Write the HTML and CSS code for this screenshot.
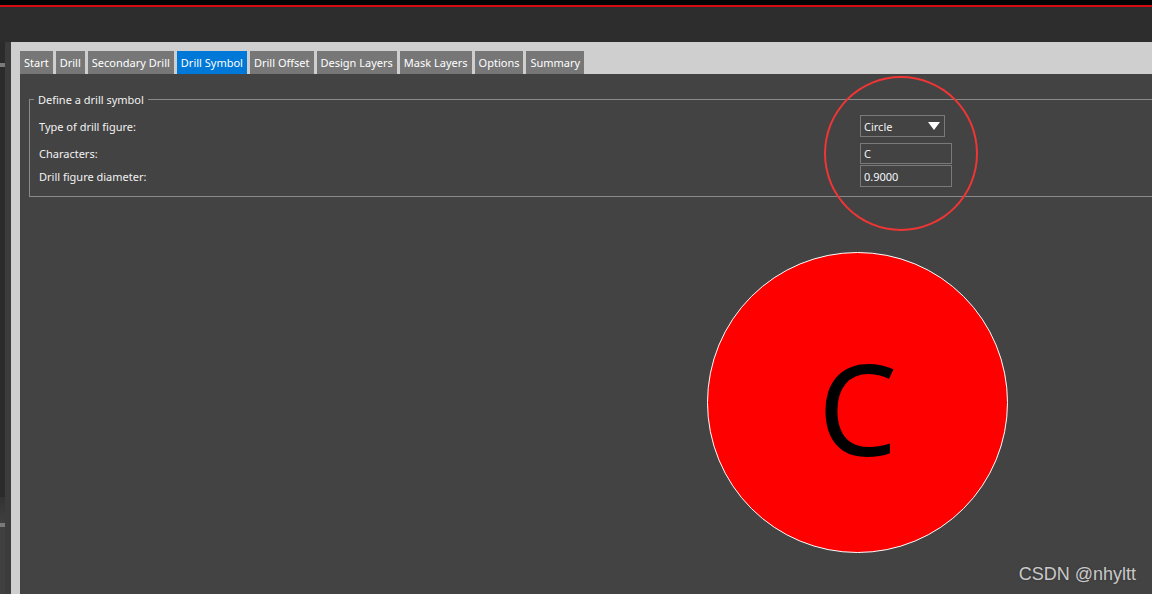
FILE: index.html
```html
<!DOCTYPE html>
<html lang="en">

<head>
    <meta charset="UTF-8">
    <meta name="viewport" content="width=device-width, initial-scale=1.0">
    <title>Drill Symbol</title>
    <link rel="stylesheet" href="styles.css">
</head>

<body>
    <!-- pasek tytułowy aplikacji -->
    <div class="titlebar">
        <div class="accent"></div>
    </div>

    <div class="workspace">
        <!-- wąski panel boczny po lewej -->
        <div class="sidebar">
            <div class="strip">
                <div class="strip-top"></div>
                <div class="strip-mark"></div>
                <div class="strip-body"></div>
                <div class="strip-fade"></div>
                <div class="strip-mark"></div>
            </div>
            <div class="gutter"></div>
        </div>

        <!-- okno dialogowe z zakładkami -->
        <div class="dialog">
            <div class="tabs">
                <div class="tab">Start</div>
                <div class="tab">Drill</div>
                <div class="tab">Secondary Drill</div>
                <div class="tab active">Drill Symbol</div>
                <div class="tab">Drill Offset</div>
                <div class="tab">Design Layers</div>
                <div class="tab">Mask Layers</div>
                <div class="tab">Options</div>
                <div class="tab">Summary</div>
            </div>

            <div class="panel">
                <fieldset class="group">
                    <legend>Define a drill symbol</legend>
                    <div class="form">
                        <label class="row-type">Type of drill figure:</label>
                        <div class="combo row-type">
                            <span>Circle</span>
                            <span class="arrow"></span>
                        </div>
                        <label class="row-char">Characters:</label>
                        <div class="field row-char">C</div>
                        <label class="row-diam">Drill figure diameter:</label>
                        <div class="field field-diam row-diam">0.9000</div>
                    </div>
                </fieldset>

                <!-- podgląd symbolu wiercenia -->
                <div class="preview">
                    <div class="symbol">C</div>
                </div>

                <div class="highlight"></div>
                <div class="watermark">CSDN @nhyltt</div>
            </div>
        </div>
    </div>
</body>

</html>
```

FILE: styles.css
```css
/* Cała strona */
body {
    margin: 0;
    padding: 0;
    width: 1152px;
    height: 594px;
    overflow: hidden;
    background-color: #2d2d2d;
    font-family: "Noto Sans", "Open Sans", sans-serif;
    font-size: 11px;
    color: #f2f2f2;
}

/* Pasek tytułowy */
.titlebar {
    height: 42px;
    border-top: 5px solid #050505;
    box-sizing: border-box;
    background-color: #2d2d2d;
}

.accent {
    height: 2px;
    background-color: #d40d12;
}

.workspace {
    display: flex;
    height: 552px;
}

/* Panel boczny */
.sidebar {
    display: flex;
    width: 11px;
}

.strip {
    width: 5px;
    display: flex;
    flex-direction: column;
    background-color: #404040;
}

.strip-top {
    height: 21px;
    background-color: #2b2b2b;
}

.strip-mark {
    height: 4px;
    background-color: #7a7a7a;
}

.strip-body {
    height: 430px;
    background-color: #2b2b2b;
}

.strip-fade {
    height: 26px;
    background: linear-gradient(#333, #404040);
}

.gutter {
    width: 6px;
    background-color: #3c3c3c;
}

/* Okno dialogowe */
.dialog {
    flex: 1;
    display: flex;
    flex-direction: column;
    padding: 9px 0 0 9px;
    background-color: #cfcfcf;
}

.tabs {
    display: flex;
    gap: 3px;
    height: 23px;
}

.tab {
    padding: 0 4px;
    line-height: 23px;
    background-color: #777;
    color: #fff;
    white-space: nowrap;
}

.tab.active {
    background-color: #0078d7;
}

/* Zawartość zakładki */
.panel {
    flex: 1;
    position: relative;
    padding: 19px 0 0 9px;
    background-color: #434343;
    overflow: hidden;
}

.group {
    margin: 0 -20px 0 0;
    padding: 9px 0 9px 9px;
    border: 1px solid #8a8a8a;
    min-width: 0;
}

.group legend {
    margin-left: -5px;
    padding: 0 4px;
    line-height: 13px;
    color: #f2f2f2;
}

/* Siatka etykiet i pól */
.form {
    display: grid;
    grid-template-columns: 821px 92px;
    grid-template-rows: 22px 6px 21px 1px 22px;
    align-items: center;
}

.form label {
    color: #f2f2f2;
}

.row-type {
    grid-row: 1;
}

.row-char {
    grid-row: 3;
}

.row-diam {
    grid-row: 5;
}

.combo {
    width: 85px;
    height: 22px;
    box-sizing: border-box;
    border: 1px solid #7a7a7a;
    padding: 0 4px 0 3px;
    display: flex;
    align-items: center;
    justify-content: space-between;
}

.arrow {
    width: 0;
    height: 0;
    border-left: 6px solid transparent;
    border-right: 6px solid transparent;
    border-top: 8px solid #fff;
}

.field {
    height: 100%;
    box-sizing: border-box;
    border: 1px solid #7a7a7a;
    padding: 0 3px;
    display: flex;
    align-items: center;
}

.field-diam {
    color: #f4f8ff;
}

/* Podgląd symbolu */
.preview {
    padding: 55px 0 0 678px;
}

.symbol {
    width: 301px;
    height: 301px;
    box-sizing: border-box;
    border: 1px solid #fff;
    border-radius: 50%;
    background-color: #ff0000;
    display: flex;
    justify-content: center;
    align-items: center;
    color: #000;
    font-size: 126px;
    line-height: 1;
    padding-top: 8px;
}

/* Czerwone zaznaczenie nad polami */
.highlight {
    position: absolute;
    left: 804px;
    top: 2px;
    width: 154px;
    height: 155px;
    box-sizing: border-box;
    border: 2.5px solid #f03535;
    border-radius: 50%;
}

.watermark {
    position: absolute;
    right: 16px;
    bottom: 9px;
    font-family: "Liberation Sans", Arial, sans-serif;
    font-size: 18px;
    color: #c9c9c9;
    text-shadow: 0 0 2px #333;
}
```
